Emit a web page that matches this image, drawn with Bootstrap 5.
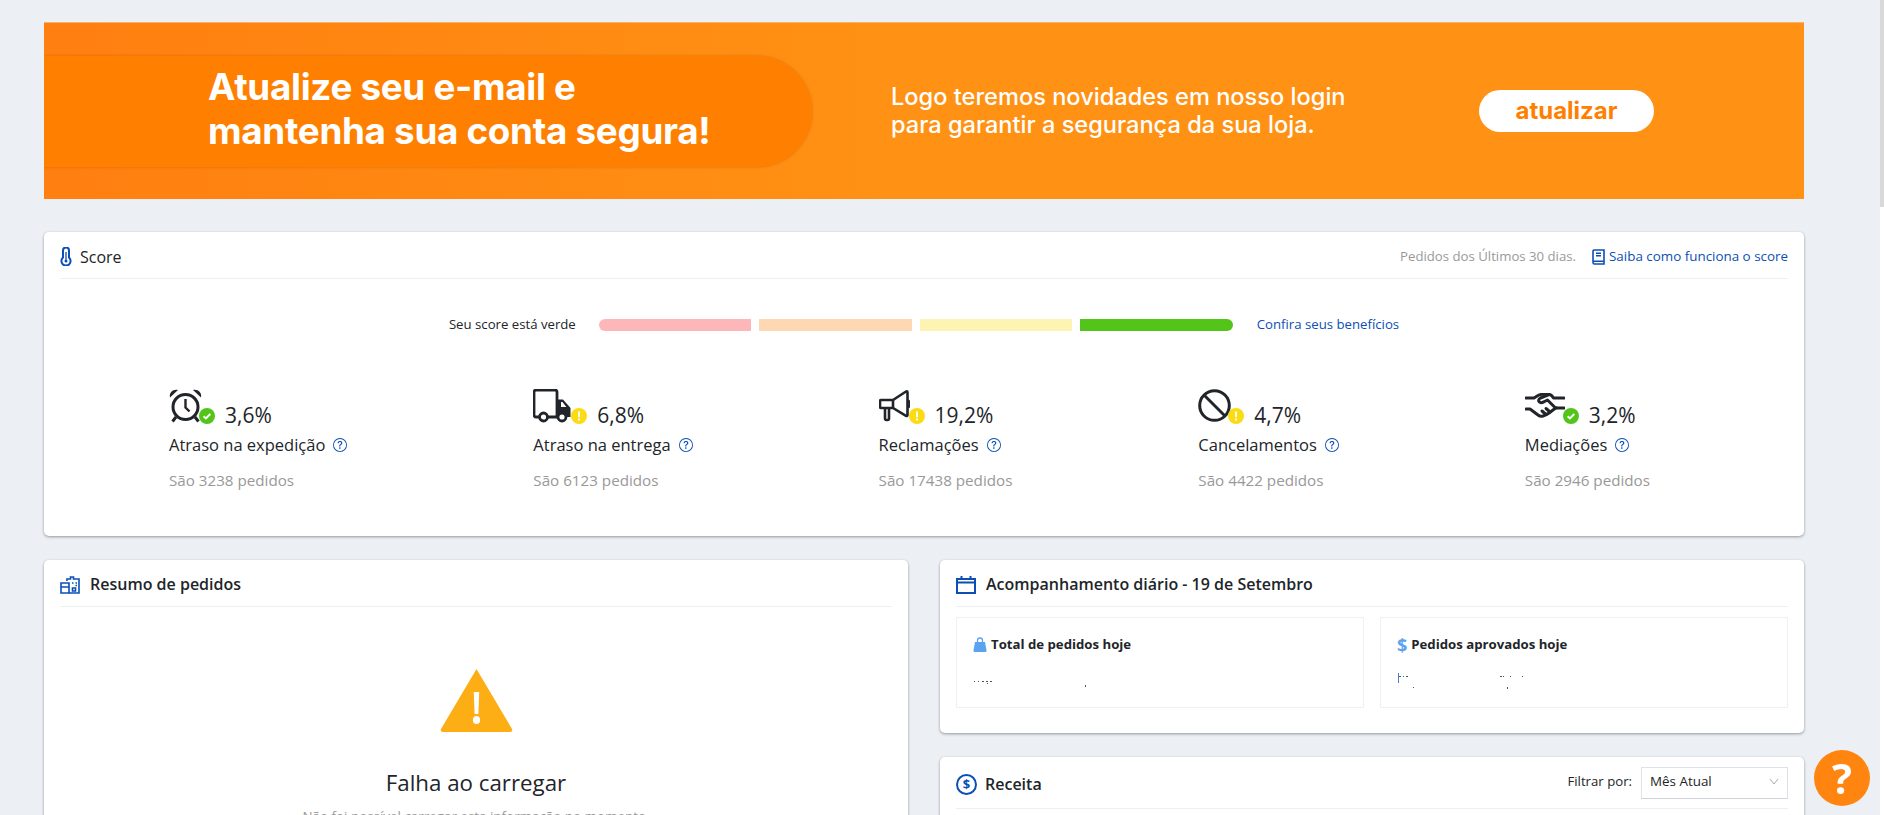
<!DOCTYPE html>
<html lang="pt-BR">
<head>
  <meta charset="UTF-8">
  <title>Painel</title>
  <link href="https://cdn.jsdelivr.net/npm/bootstrap@5.3.2/dist/css/bootstrap.min.css" rel="stylesheet">
  <style>
    html,body{height:815px;overflow:hidden}
    body{background:#ecf0f5;font-family:"Open Sans","Liberation Sans",sans-serif;color:#212529}
    .page-wrap{padding:22px 80px 0 44px}

    /* banner */
    .promo{height:177px;margin-bottom:33px;overflow:hidden;border-top:1px solid #f5b26c;background:linear-gradient(90deg,#ff7f10 0,#ff9214 50%,#ff9214 100%);font-family:Inter,"Liberation Sans",sans-serif;color:#fff}
    .promo-pill{width:768px;height:111px;padding:0 0 4px 164px;background:#ff8000;border-radius:0 56px 56px 0;box-shadow:0 0 3px rgba(190,90,0,.55)}
    .promo-title{font-size:36.800px;line-height:44px;font-weight:700;letter-spacing:-.3px;margin:0}
    .promo-text{margin-left:79px;width:588px;font-size:23.600px;line-height:28px;font-weight:500}
    .promo-btn{width:175px;height:42px;border-radius:21px;background:#fff;color:#ff8000;font-size:24px;font-weight:700;padding:0;border:0}

    /* cards */
    .panel{border:0;border-radius:5px;box-shadow:0 1px 3px rgba(0,0,0,.38);padding:0 16px}
    .panel-head{height:47px;padding-top:3px;border-bottom:1px solid #eceff3}
    .panel-title{font-size:16px;font-weight:600;margin:1px 0 0}
    .score-title{font-size:16px;font-weight:500}
    .hint{font-size:13.200px;color:#999}
    .blue-link{font-size:13.400px;color:#0b4fb5;text-decoration:none}
    .score-row .blue-link{font-size:13.200px}
    .ic-blue{fill:none;stroke:#0b4fb5;stroke-width:2}
    .dollar-ring{width:21px;height:21px;border:2px solid #0b4fb5;border-radius:50%;color:#0b4fb5;font-size:13px;font-weight:700;line-height:17px;text-align:center}

    /* score bar */
    .score-row{margin-top:36px;height:20px}
    .score-label{font-size:13.200px;font-weight:500;margin-right:23px}
    .score-seg{width:152.500px;height:12px;margin-right:8px}
    .seg-a{background:#fdb7b9;border-radius:6px 0 0 6px}
    .seg-b{background:#fdd8b2}
    .seg-c{background:#fdf3b3}
    .seg-d{background:#52c41a;border-radius:0 6px 6px 0;margin-right:24px}

    /* metricas */
    .metrics{margin-top:54px;padding:0 45px 46px 16px}
    .metric-ico{height:35px}
    .status-dot{position:absolute;right:0;bottom:0;width:16px;height:16px}
    .metric-val{font-size:21px;font-weight:500;line-height:24px;margin:0 0 -3px 10px}
    .metric-name{font-size:16.500px;font-weight:500;line-height:22px;margin-top:10px}
    .metric-sub{font-size:15.200px;line-height:20px;margin-top:14px;color:#999}

    .dash-row{--bs-gutter-x:32px}
    .stat-box{flex:1 1 0;height:91px;border:1px solid #eff1f4;padding:17px 16px 0;font-size:13.200px;font-weight:700}
    .stat-ico{color:#5ba3ee;font-size:18px;line-height:18px}
    .stat-scraps{display:block;margin-top:18px}
    .fail-title{font-size:22.300px;line-height:30px;margin:36px 0 0;font-weight:400}
    .fail-sub{font-size:13.400px;line-height:20px;margin:8px 0 0;color:#999}
    .filter-label{font-size:13.200px;margin:-5px 9px 0 0}
    .filter-box{width:147px;height:32px;margin-top:-3px;padding:0 8px 2px;border:1px solid #dee2e6;border-bottom-color:#cfd4da;font-size:13.400px}

    .help-fab{position:fixed;left:1814px;top:750px;width:56px;height:56px;border-radius:50%;padding:0;border:0;background:#ff8510;color:#fff;font-size:42px;font-weight:700;line-height:56px}
    .fake-scroll{position:fixed;right:0;top:0;width:4px;height:815px;background:#fff}
    .fake-thumb{height:207px;background:#d9d9d9}
  </style>
</head>
<body>

<svg width="0" height="0" class="position-absolute">
  <symbol id="q-circle" viewBox="0 0 16 16">
    <path fill="#0b4fb5" d="M8 15A7 7 0 1 1 8 1a7 7 0 0 1 0 14zm0 1A8 8 0 1 0 8 0a8 8 0 0 0 0 16z"/>
    <path fill="#0b4fb5" d="M5.255 5.786a.237.237 0 0 0 .241.247h.825c.138 0 .248-.113.266-.25.09-.656.54-1.134 1.342-1.134.686 0 1.314.343 1.314 1.168 0 .635-.374.927-.965 1.371-.673.489-1.206 1.06-1.168 1.987l.003.217a.25.25 0 0 0 .25.246h.811a.25.25 0 0 0 .25-.25v-.105c0-.718.273-.927 1.01-1.486.609-.463 1.244-.977 1.244-2.056 0-1.511-1.276-2.241-2.673-2.241-1.267 0-2.655.59-2.75 2.286zm1.557 5.763c0 .533.425.927 1.01.927.609 0 1.028-.394 1.028-.927 0-.552-.42-.94-1.029-.94-.584 0-1.009.388-1.009.94z"/>
  </symbol>
  <symbol id="dot-ok" viewBox="0 0 16 16">
    <circle cx="8" cy="8" r="8" fill="#52c41a"/>
    <path d="M4.6 8.2l2.3 2.2 4.4-4.4" fill="none" stroke="#fff" stroke-width="1.9"/>
  </symbol>
  <symbol id="dot-warn" viewBox="0 0 16 16">
    <circle cx="8" cy="8" r="8" fill="#fadb14"/>
    <path d="M8 3.6v5.6M8 10.6v1.9" fill="none" stroke="#fff" stroke-width="1.9"/>
  </symbol>
</svg>

<div class="page-wrap">

  <!-- banner -->
  <div class="promo d-flex align-items-center">
    <div class="promo-pill d-flex align-items-center flex-shrink-0">
      <h2 class="promo-title">Atualize seu e-mail e<br>mantenha sua conta segura!</h2>
    </div>
    <div class="promo-text">Logo teremos novidades em nosso login<br>para garantir a segurança da sua loja.</div>
    <button class="btn promo-btn">atualizar</button>
  </div>

  <!-- score -->
  <div class="card panel mb-4">
    <div class="panel-head d-flex align-items-center">
      <svg class="ic-blue me-2" width="12" height="19" viewBox="0 0 12 19"><path d="M3 10.500V3.500a3 3 0 0 1 6 0v7a4.600 4.600 0 1 1-6 0z"/><circle cx="6" cy="14" r="1.500" fill="#0b4fb5" stroke="none"/><path d="M6 5v9" stroke-width="1.300"/></svg>
      <span class="score-title">Score</span>
      <span class="hint ms-auto me-3">Pedidos dos Últimos 30 dias.</span>
      <svg class="ic-blue me-1" width="13" height="16" viewBox="0 0 13 16"><path stroke-width="1.600" d="M1 13V2a1 1 0 0 1 1-1h10v14H2.400A1.400 1.400 0 0 1 1 13.600 1.400 1.400 0 0 1 2.400 12.200H12M4 4.200h5M4 6.800h5"/></svg>
      <a class="blue-link" href="#">Saiba como funciona o score</a>
    </div>

    <div class="score-row d-flex align-items-center justify-content-center">
      <span class="score-label">Seu score está verde</span>
      <div class="score-seg seg-a"></div>
      <div class="score-seg seg-b"></div>
      <div class="score-seg seg-c"></div>
      <div class="score-seg seg-d"></div>
      <a class="blue-link" href="#">Confira seus benefícios</a>
    </div>

    <div class="metrics d-flex justify-content-around">
      <div>
        <div class="d-flex align-items-end">
          <div class="metric-ico position-relative" style="width:46px">
            <svg width="33" height="34" viewBox="0 0 33 34" fill="none" stroke="#212529" stroke-width="3">
              <circle cx="16.500" cy="18" r="12.500"/>
              <path d="M16.500 10v8.500l4 4" stroke-width="2.400"/>
              <path d="M1 8.500C0 3.500 4 0 9 1zM32 8.500C33 3.500 29 0 24 1z" fill="#212529" stroke="none"/>
              <path d="M7 28l-3.500 4.500M26 28l3.500 4.500"/>
            </svg>
            <svg class="status-dot"><use href="#dot-ok"/></svg>
          </div>
          <span class="metric-val">3,6%</span>
        </div>
        <div class="metric-name d-flex align-items-center gap-2">Atraso na expedição <svg width="14" height="14"><use href="#q-circle"/></svg></div>
        <div class="metric-sub">São 3238 pedidos</div>
      </div>

      <div>
        <div class="d-flex align-items-end">
          <div class="metric-ico position-relative" style="width:54px">
            <svg width="39" height="34" viewBox="0 0 39 34" fill="none" stroke="#212529" stroke-width="2.800">
              <path d="M6 28H3a2 2 0 0 1-2-2V3a2 2 0 0 1 2-2h19a2 2 0 0 1 2 2v25H15"/>
              <path d="M25 10.500h5l7.500 8.500v9H34V28H25z" fill="#212529" stroke="none"/>
              <path d="M28 13h1.500l3.800 5H28z" fill="#fff" stroke="none"/>
              <circle cx="10.500" cy="28" r="4" fill="#fff"/>
              <circle cx="29" cy="28" r="4" fill="#fff"/>
            </svg>
            <svg class="status-dot"><use href="#dot-warn"/></svg>
          </div>
          <span class="metric-val">6,8%</span>
        </div>
        <div class="metric-name d-flex align-items-center gap-2">Atraso na entrega <svg width="14" height="14"><use href="#q-circle"/></svg></div>
        <div class="metric-sub">São 6123 pedidos</div>
      </div>

      <div>
        <div class="d-flex align-items-end">
          <div class="metric-ico position-relative" style="width:46px">
            <svg width="31" height="33" viewBox="0 0 31 33" fill="none" stroke="#212529" stroke-width="2.600">
              <path d="M2 11h12l13-8.500c1-.600 1.500-.200 1.500 1V26c0 1-.600 1.300-1.500.800L14 19H2c-.600 0-1-.400-1-1v-6c0-.600.400-1 1-1z"/>
              <path d="M14 11v8M6 19v10.500c0 1 .500 1.500 1.500 1.500h1c1 0 1.500-.500 1.500-1.500V19"/>
              <path d="M29 11.500c1.200.800 1.500 2 1.500 3.500s-.300 2.700-1.500 3.500"/>
            </svg>
            <svg class="status-dot"><use href="#dot-warn"/></svg>
          </div>
          <span class="metric-val">19,2%</span>
        </div>
        <div class="metric-name d-flex align-items-center gap-2">Reclamações <svg width="14" height="14"><use href="#q-circle"/></svg></div>
        <div class="metric-sub">São 17438 pedidos</div>
      </div>

      <div>
        <div class="d-flex align-items-end">
          <div class="metric-ico position-relative" style="width:46px">
            <svg width="33" height="33" viewBox="0 0 33 33" fill="none" stroke="#212529" stroke-width="3">
              <circle cx="16.500" cy="16.500" r="14.800"/>
              <path d="M6 6l21 21"/>
            </svg>
            <svg class="status-dot"><use href="#dot-warn"/></svg>
          </div>
          <span class="metric-val">4,7%</span>
        </div>
        <div class="metric-name d-flex align-items-center gap-2">Cancelamentos <svg width="14" height="14"><use href="#q-circle"/></svg></div>
        <div class="metric-sub">São 4422 pedidos</div>
      </div>

      <div>
        <div class="d-flex align-items-end">
          <div class="metric-ico position-relative" style="width:54px">
            <svg class="mt-1" width="40" height="25" viewBox="0 0 40 25" fill="none" stroke="#212529" stroke-width="3" stroke-linecap="round" stroke-linejoin="round">
              <path d="M1 5h8l4-2.500c2-1 4-1.500 6-1h5c1.500 0 3 .800 4.500 3.500H39"/>
              <path d="M1 16h4l8 6c2 1.500 3.500 1.500 5 1 2.500-.500 4-1.500 6-3l6-4.500c1-.800 1.500-.800 2.500-.500H39"/>
              <path d="M24 1.500L15.500 5c-2 1-2.500 3-1 4s3 1 5-.500l3-1.500 8 8"/>
              <path d="M21 15.500l4 3.500M17 18l4 3.500"/>
            </svg>
            <svg class="status-dot"><use href="#dot-ok"/></svg>
          </div>
          <span class="metric-val">3,2%</span>
        </div>
        <div class="metric-name d-flex align-items-center gap-2">Mediações <svg width="14" height="14"><use href="#q-circle"/></svg></div>
        <div class="metric-sub">São 2946 pedidos</div>
      </div>
    </div>
  </div>

  <div class="row dash-row">
    <!-- resumo -->
    <div class="col-6">
      <div class="card panel">
        <div class="panel-head d-flex align-items-center">
          <svg class="ic-blue" style="margin-right:10px" width="20" height="18" viewBox="0 0 20 18"><path stroke-width="1.600" d="M7 5V3h3.500V1h3v2H19v14H9"/><path stroke-width="1.600" d="M1 7h8v10H1zM1 11h8M12 7h1.500M15.500 7H17M15.500 9.500H17M12.500 12h3v3h-3z"/></svg>
          <h3 class="panel-title">Resumo de pedidos</h3>
        </div>
        <div class="text-center" style="padding-top:61px;height:600px">
          <svg width="73" height="64" viewBox="0 0 73 64">
            <path d="M36.500 1L72 61c.600 1.200 0 3-1.500 3h-68C1 64 .400 62.200 1 61z" fill="#fdae15"/>
            <path d="M33.800 24h5.400l-.8 22h-3.800z" fill="#fff"/>
            <ellipse cx="36.500" cy="52" rx="3.600" ry="4" fill="#fff"/>
          </svg>
          <p class="fail-title">Falha ao carregar</p>
          <p class="fail-sub">Não foi possível carregar esta informação no momento.</p>
        </div>
      </div>
    </div>

    <!-- coluna direita -->
    <div class="col-6">
      <div class="card panel mb-4" style="height:173px">
        <div class="panel-head d-flex align-items-center">
          <svg class="ic-blue" style="margin-right:10px" width="20" height="18" viewBox="0 0 20 18"><path d="M1 3h18v14H1zM1 6.500h18M5.500 0v4M14.500 0v4"/></svg>
          <h3 class="panel-title">Acompanhamento diário - 19 de Setembro</h3>
        </div>
        <div class="d-flex gap-3" style="margin-top:10px">
          <div class="stat-box">
            <div class="d-flex align-items-center gap-1">
              <svg width="14" height="15" viewBox="0 0 14 15"><path fill="#5ba3ee" d="M2 5h10l1.500 8.500c0 1-.500 1.500-1.500 1.500H2c-1 0-1.500-.500-1.500-1.500z"/><path d="M4.500 6V3.500a2.500 2.500 0 0 1 5 0V6" fill="none" stroke="#5ba3ee" stroke-width="1.300"/></svg>
              Total de pedidos hoje
            </div>
            <svg class="stat-scraps" width="120" height="14"><path d="M1 8h1v1H1zM5 8h1v1H5zM9 8h2v1H9zM13 8h2v1h-2zM17 8h2v1h-2zM14 10h1v1h-1zM112 12h1v2h-1z" fill="#555"/></svg>
          </div>
          <div class="stat-box">
            <div class="d-flex align-items-center gap-1">
              <span class="stat-ico">$</span>
              Pedidos aprovados hoje
            </div>
            <svg class="stat-scraps" width="140" height="20"><path d="M1 0h1v10H1z" fill="#4a7fc0"/><path d="M2 3h2v1H2zM6 3h1v1H6zM9 3h2v1H9zM103 3h2v1h-2zM106 3h1v1h-1zM113 3h1v1h-1zM125 3h1v1h-1zM16 14h1v1h-1zM110 14h1v2h-1z" fill="#555"/></svg>
          </div>
        </div>
      </div>

      <div class="card panel" style="height:300px">
        <div class="panel-head d-flex align-items-center" style="height:52px">
          <span class="dollar-ring me-2">$</span>
          <h3 class="panel-title">Receita</h3>
          <span class="filter-label ms-auto">Filtrar por:</span>
          <div class="filter-box d-flex align-items-center justify-content-between">
            Mês Atual
            <svg width="10" height="7" viewBox="0 0 10 7"><path d="M1 1l4 5 4-5" fill="none" stroke="#aaa"/></svg>
          </div>
        </div>
      </div>
    </div>
  </div>
</div>

<button class="help-fab">?</button>
<div class="fake-scroll"><div class="fake-thumb"></div></div>

<script src="https://cdn.jsdelivr.net/npm/bootstrap@5.3.2/dist/js/bootstrap.bundle.min.js"></script>
</body>
</html>
